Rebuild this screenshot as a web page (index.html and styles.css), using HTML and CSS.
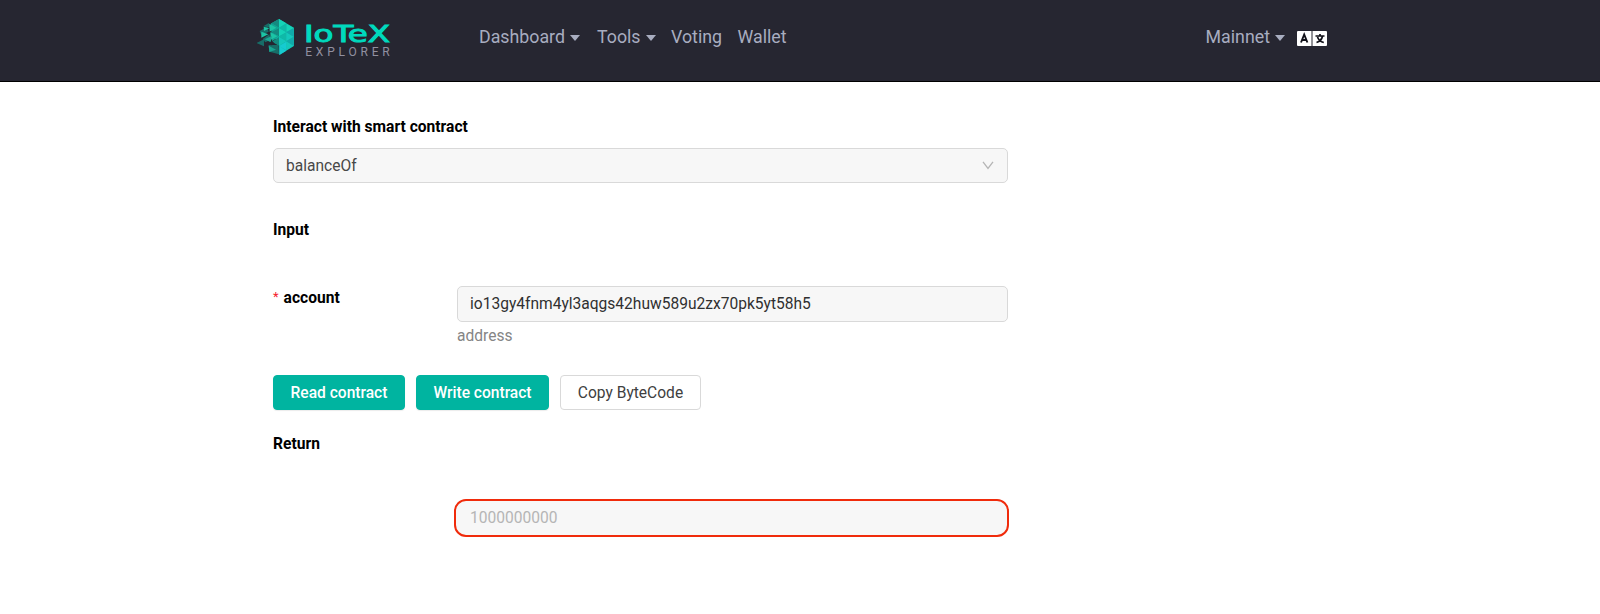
FILE: index.html
```html
<!DOCTYPE html>
<html lang="en">
<head>
<meta charset="utf-8">
<title>IoTeX Explorer</title>
<link rel="stylesheet" href="styles.css">
</head>
<body>
<header class="header">
  <a class="logo">
    <svg class="logo-svg" viewBox="0 0 150 44" width="150" height="44">
      <g transform="translate(-3 -2) scale(.33333)">
        <path fill="#12b5a6" d="M75 6 120 32V87L76 114V86L60 76 66 68 52 54 54 30 50 20Z"/>
        <path fill="#148a80" d="M52 19 75 6V32ZM50 46 75 33V58ZM54 74 75 60V86Z"/>
        <path fill="#12a392" d="M52 19 75 32 53 45ZM50 46 75 58 55 73Z"/>
        <path fill="#15d3b8" d="M75 6 97 19 75 32ZM75 33 97 46 75 58ZM97 20 119 33 97 45Z"/>
        <path fill="#0fb9a8" d="M97 20V45L75 33ZM97 46V72L75 59Z"/>
        <path fill="#14c8bb" d="M97 46 119 59 97 72ZM75 60 97 73 75 86ZM97 73 119 86 97 100Z"/>
        <path fill="#11a9aa" d="M119 34V59L97 46ZM119 60V86L97 73Z"/>
        <path fill="#16cbd0" d="M75 87 97 74V100ZM76 88 97 101 76 114Z"/>
        <path fill="#176d68" d="M28 28 44 18 50 32ZM17 42 40 30 44 44 22 54ZM7 78 30 67V88ZM26 66 46 52 50 68 34 76ZM44 84 74 84 75 112 46 104Z"/>
        <path fill="#1cc4a5" d="M29 29 46 34 30 42ZM46 20 67 32 47 44ZM22 44 43 52 22 62ZM49 46 70 58 50 68Z"/>
        <path fill="#19a692" d="M32 67 54 57 50 76ZM44 86 66 98 46 105Z"/>
        <path fill="#262631" d="M42 79 54 72 60 78 54 85 44 84 32 86Z"/>
      </g>
      <text class="logo-name" x="47" y="23" textLength="86" lengthAdjust="spacingAndGlyphs">IoTeX</text>
      <text class="logo-sub" x="48.2" y="37" textLength="84.5" lengthAdjust="spacing">EXPLORER</text>
    </svg>
  </a>
  <nav class="nav">
    <a class="nav-item nav-dashboard">Dashboard<i class="caret"></i></a>
    <a class="nav-item nav-tools">Tools<i class="caret"></i></a>
    <a class="nav-item nav-voting">Voting</a>
    <a class="nav-item">Wallet</a>
  </nav>
  <div class="nav-right">
    <a class="nav-item">Mainnet<i class="caret"></i></a>
    <svg class="lang" viewBox="0 0 30 15" width="30" height="15">
      <rect width="30" height="15" rx="1" fill="#fff"/>
      <path d="M15 0V15" stroke="#262631"/>
      <path d="M4 11.5 7.2 3.5 10.4 11.5M5.2 9H9.2" fill="none" stroke="#111119" stroke-width="1.9"/>
      <path d="M18.5 5H27.5M23 3V5M25.5 5C25 8 22.5 10.5 19.5 11.5M20.5 6C21.5 9 24 10.8 26.8 11.5" fill="none" stroke="#111119" stroke-width="1.7"/>
    </svg>
  </div>
</header>
<main class="content">
  <h3 class="title">Interact with smart contract</h3>
  <div class="field select">
    <span>balanceOf</span>
    <svg viewBox="0 0 12 9" width="12" height="9"><path d="M1 .8 6 7.5 11 .8" fill="none" stroke="#b5b5b5" stroke-width="1.3"/></svg>
  </div>
  <h3 class="title title-input">Input</h3>
  <div class="row">
    <label class="label"><span class="required">*</span>account</label>
    <div class="control">
      <div class="field value">io13gy4fnm4yl3aqgs42huw589u2zx70pk5yt58h5</div>
      <div class="help">address</div>
    </div>
  </div>
  <div class="buttons">
    <button class="btn primary read">Read contract</button>
    <button class="btn primary write">Write contract</button>
    <button class="btn copy">Copy ByteCode</button>
  </div>
  <h3 class="title title-return">Return</h3>
  <div class="result">1000000000</div>
</main>
</body>
</html>
```

FILE: styles.css
```css
* { box-sizing: border-box; }
body {
  margin: 0;
  background: #fff;
  font: 15.57px/24px Roboto, sans-serif;
  color: #000;
}
.header {
  display: flex;
  align-items: flex-start;
  height: 82px;
  padding: 19px 273px 0 257px;
  background: #262631;
  border-bottom: 1px solid #000;
}
.logo { width: 222px; }
.logo-svg { display: block; }
.logo-name { font: 23px "DejaVu Sans", sans-serif; fill: #00d9bd; stroke: #00d9bd; stroke-width: 1px; }
.logo-sub { font: 12px Roboto, sans-serif; fill: #9190a0; }
.nav { display: flex; }
.nav-item {
  display: flex;
  align-items: center;
  height: 36px;
  font-size: 17.8px;
  color: #a8adc0;
}
.caret {
  margin: 2px 0 0 5px;
  border: 5px solid transparent;
  border-top: 6px solid #a8adc0;
  border-bottom: 0;
}
.nav-dashboard { width: 118px; }
.nav-tools { width: 74px; }
.nav-voting { width: 66.5px; }
.nav-right { display: flex; align-items: center; margin-left: auto; gap: 12px; }
.lang { display: block; margin-top: 2px; }
.content { width: 735px; margin-left: 273px; padding-top: 33px; }
.title { margin: 0; font-size: 15.6px; line-height: 24px; font-weight: 700; }
.field {
  display: flex;
  align-items: center;
  height: 36px;
  padding: 0 12px;
  border: 1px solid #d9d9d9;
  border-radius: 5px;
  background: #f7f7f7;
}
.select { height: 35px; justify-content: space-between; margin-top: 9px; padding-right: 13px; color: #484848; }
.title-input { margin-top: 35px; }
.row { display: flex; margin-top: 44px; }
.label { width: 184px; font-weight: 700; }
.required { margin-right: 5px; color: #f5222d; font-weight: 400; font-size: 13px; vertical-align: 2px; line-height: 1; }
.control { flex: 1; }
.value { color: #303030; }
.help { margin-top: 2px; color: #858585; line-height: 24px; }
.buttons { display: flex; gap: 11px; margin-top: 27px; }
.btn {
  height: 35px;
  padding: 0;
  border: 1px solid #d9d9d9;
  border-radius: 4px;
  background: #fff;
  color: #404040;
  font: 15.57px Roboto, sans-serif;
}
.primary { border-color: #00b4a0; background: #00b4a0; color: #fff; font-weight: 500; box-shadow: 0 1px 1px rgba(0,0,0,.08); }
.read { width: 132px; }
.write { width: 133px; }
.copy { width: 141px; }
.title-return { margin-top: 22px; }
.result {
  width: 555px;
  height: 38px;
  margin: 43px 0 0 181px;
  padding: 0 14px;
  border: 2px solid #f02b0b;
  border-radius: 12px;
  background: #f7f7f7;
  color: #b5b5b5;
  line-height: 34px;
}
```
